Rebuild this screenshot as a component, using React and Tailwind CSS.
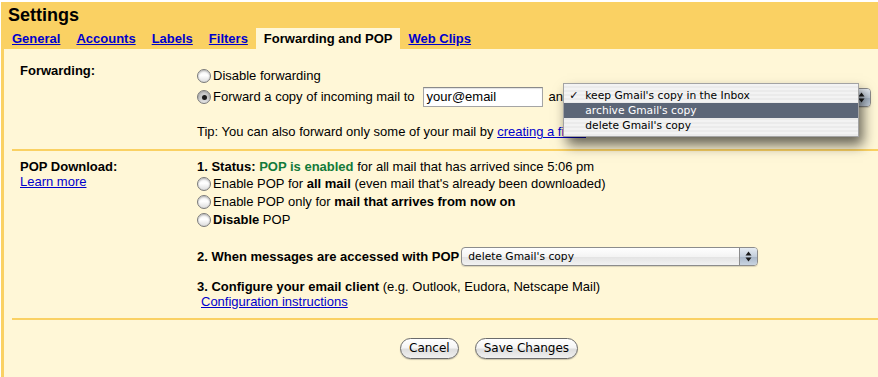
const Radio = ({ checked }) => (
  <span
    className={`mr-[2px] inline-flex h-[14px] w-[14px] shrink-0 items-center justify-center rounded-full border border-[#7a7a7a] shadow-[inset_0_1px_2px_rgba(0,0,0,0.3)] ${
      checked
        ? 'bg-[linear-gradient(to_bottom,#d8d8d8,#c4c4c4_50%,#e8e8e8)]'
        : 'bg-[linear-gradient(to_bottom,#f4f4f4,#ffffff_45%,#dcdcdc)]'
    }`}
  >
    {checked && <span className="h-[5px] w-[5px] rounded-full bg-[#1c1c1c]" />}
  </span>
);

const Arrows = () => (
  <svg width="7" height="11" viewBox="0 0 7 11">
    <path d="M3.5 0.5 L6.5 4.5 H0.5 Z M0.5 6.5 H6.5 L3.5 10.5 Z" fill="#1a1a1a" />
  </svg>
);

const Select = ({ label, width }) => (
  <div
    className={`relative flex h-[19px] shrink-0 items-stretch rounded-[4px] border border-[#8c8c8c] bg-[linear-gradient(to_bottom,#ffffff,#f4f4f4_50%,#e4e4e4_55%,#f2f2f2)] shadow-[0_1px_1px_rgba(0,0,0,0.15)] ${width}`}
  >
    <span className="flex-1 truncate pl-[6px] font-['DejaVu_Sans',sans-serif] text-[10.7px] leading-[17px] text-black">
      {label}
    </span>
    <span className="flex w-[18px] items-center justify-center rounded-r-[3px] border-l border-[#8c8c8c] bg-[linear-gradient(to_bottom,#e6ecf3,#c3cedb_50%,#aab8c9_55%,#c9d4e1)]">
      <Arrows />
    </span>
  </div>
);

const Link = ({ children }) => <span className="cursor-pointer text-[#0000cc] underline">{children}</span>;

const AquaButton = ({ children }) => (
  <button className="h-[21px] rounded-full border border-[#6b6b6b] bg-[linear-gradient(to_bottom,#ffffff_0%,#f5f5f5_45%,#dedede_55%,#f0f0f0_100%)] px-[8px] font-['DejaVu_Sans',sans-serif] text-[12px] leading-[19px] text-black shadow-[0_1px_1px_rgba(0,0,0,0.2)]">
    {children}
  </button>
);

const tabs = ['General', 'Accounts', 'Labels', 'Filters', 'Forwarding and POP', 'Web Clips'];

export default function App() {
  return (
    <div className="h-[377px] w-[878px] overflow-hidden bg-white pl-px pt-[2px] font-['Liberation_Sans',Arial,sans-serif] text-[13px] text-black">
      <div className="flex h-full flex-col bg-[#fad163]">
        {/* header */}
        <div className="h-[26px] pl-[7px] text-[18px] font-bold leading-[26px]">Settings</div>
        <div className="ml-[3px] flex h-[21px] text-[13px] font-bold leading-[21px]">
          {tabs.map((t) =>
            t === 'Forwarding and POP' ? (
              <span key={t} className="bg-[#fff7d7] px-[8px]">
                {t}
              </span>
            ) : (
              <span key={t} className="px-[8px] text-[#0000cc] underline">
                {t}
              </span>
            )
          )}
        </div>

        {/* content */}
        <div className="ml-[3px] flex-1 bg-[#fff7d7]">
          {/* Forwarding */}
          <div className="ml-[8px] flex h-[102px] border-b-2 border-[#fad163] pl-[8px] pt-[14px]">
            <div className="w-[177px] font-bold leading-[16px]">Forwarding:</div>
            <div className="mt-[3px] flex flex-col">
              <div className="flex h-[19px] items-center leading-[16px]">
                <Radio />
                Disable forwarding
              </div>
              <div className="flex h-[24px] items-center leading-[16px]">
                <Radio checked />
                Forward a copy of incoming mail to
                <span className="ml-[8px] flex h-[20px] w-[120px] items-center border border-[#a5a5a5] border-t-[#8a8a8a] bg-white pl-[3px] shadow-[inset_0_1px_1px_rgba(0,0,0,0.12)]">
                  your@email
                </span>
                <span className="ml-[6px]">and</span>
                <div className="relative ml-[4px]">
                  <Select label="" width="w-[297px]" />
                  {/* open popup menu */}
                  <div className="absolute left-[-11px] top-[-5px] z-10 w-[296px] border border-[#a3a3a3] bg-[repeating-linear-gradient(to_bottom,#f3f3f3_0px,#f3f3f3_2px,#ebebeb_2px,#ebebeb_4px)] pb-[3px] pt-[4px] font-['DejaVu_Sans',sans-serif] text-[10.7px] leading-[15px] shadow-[4px_8px_12px_rgba(0,0,0,0.6)]">
                    <div className="relative flex h-[15px] items-center pl-[21px]">
                      <span className="absolute left-[5px] text-[11px]">✓</span>
                      keep Gmail's copy in the Inbox
                    </div>
                    <div className="flex h-[15px] items-center bg-[#5c6677] pl-[21px] text-white">archive Gmail's copy</div>
                    <div className="flex h-[15px] items-center pl-[21px]">delete Gmail's copy</div>
                  </div>
                </div>
              </div>
              <div className="mt-[15px] leading-[16px]">
                Tip: You can also forward only some of your mail by <Link>creating a filter!</Link>
              </div>
            </div>
          </div>

          {/* POP Download */}
          <div className="ml-[8px] flex h-[169px] border-b-2 border-[#fad163] pl-[8px] pt-[8px]">
            <div className="w-[177px] leading-[15px]">
              <div className="font-bold">POP Download:</div>
              <Link>Learn more</Link>
            </div>
            <div className="flex flex-col leading-[16px]">
              <div className="h-[16px]">
                <b>1. Status: </b>
                <b className="text-[#137a3a]">POP is enabled</b> for all mail that has arrived since 5:06 pm
              </div>
              <div className="flex h-[18px] items-center">
                <Radio />
                <span>
                  Enable POP for <b>all mail</b> (even mail that's already been downloaded)
                </span>
              </div>
              <div className="flex h-[18px] items-center">
                <Radio />
                <span>
                  Enable POP only for <b>mail that arrives from now on</b>
                </span>
              </div>
              <div className="flex h-[18px] items-center">
                <Radio />
                <span>
                  <b>Disable</b> POP
                </span>
              </div>
              <div className="mt-[18px] flex h-[19px] items-center gap-[2px]">
                <b>2. When messages are accessed with POP</b>
                <Select label="delete Gmail's copy" width="w-[297px]" />
              </div>
              <div className="mt-[13px] h-[16px]">
                <b>3. Configure your email client</b> (e.g. Outlook, Eudora, Netscape Mail)
              </div>
              <div className="pl-[4px] leading-[14px]">
                <Link>Configuration instructions</Link>
              </div>
            </div>
          </div>

          {/* buttons */}
          <div className="flex gap-[16px] pl-[396px] pt-[18px]">
            <AquaButton>Cancel</AquaButton>
            <AquaButton>Save Changes</AquaButton>
          </div>
        </div>
      </div>
    </div>
  );
}
